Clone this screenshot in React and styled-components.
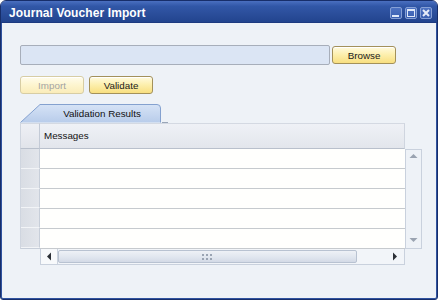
import React from 'react'
import styled, { createGlobalStyle } from 'styled-components'

const GlobalStyle = createGlobalStyle`
  html, body {
    margin: 0;
    padding: 0;
    background: #ffffff;
  }
  * { box-sizing: border-box; }
`

const rows = [1, 2, 3, 4, 5]

const App = () => {
  return (
    <>
      <GlobalStyle />
      <Window>
        <TitleBar>
          <Title>Journal Voucher Import</Title>
          <TitleButtons>
            <TitleButton aria-label="minimize">
              <svg width="10" height="10" viewBox="0 0 10 10">
                <rect x="1" y="7" width="7" height="2" fill="#dfe8f8" />
              </svg>
            </TitleButton>
            <TitleButton aria-label="maximize">
              <svg width="10" height="10" viewBox="0 0 10 10">
                <rect x="1.5" y="1.5" width="7" height="7" fill="none" stroke="#dfe8f8" strokeWidth="1" />
                <rect x="1" y="1" width="8" height="2" fill="#dfe8f8" />
              </svg>
            </TitleButton>
            <TitleButton aria-label="close">
              <svg width="10" height="10" viewBox="0 0 10 10">
                <path d="M2 2 L8 8 M8 2 L2 8" stroke="#e6ecf8" strokeWidth="2" />
              </svg>
            </TitleButton>
          </TitleButtons>
        </TitleBar>

        <Body>
          <FileRow>
            <PathInput type="text" />
            <YellowButton>Browse</YellowButton>
          </FileRow>

          <ActionRow>
            <YellowButton disabled>Import</YellowButton>
            <YellowButton>Validate</YellowButton>
          </ActionRow>

          <TabStrip>
            <Tab>
              <TabShape width="142" height="19" viewBox="0 0 142 19">
                <defs>
                  <linearGradient id="tabfill" x1="0" y1="0" x2="0" y2="1">
                    <stop offset="0" stopColor="#d6e3f6" />
                    <stop offset="1" stopColor="#b8ccea" />
                  </linearGradient>
                </defs>
                <path
                  d="M0.5 18.5 L20 0.5 L137 0.5 Q140.5 0.5 140.5 4 L140.5 18.5"
                  fill="url(#tabfill)"
                  stroke="#84a1cf"
                  strokeWidth="1"
                />
              </TabShape>
              <TabLabel>Validation Results</TabLabel>
            </Tab>
            <TabLine />
          </TabStrip>

          <Grid>
            <CornerCell />
            <HeaderCell>Messages</HeaderCell>
            <Blank />

            <RowHeaders>
              {rows.map((r) => (
                <RowHeader key={r} />
              ))}
            </RowHeaders>
            <RowsArea>
              {rows.map((r) => (
                <Row key={r} />
              ))}
            </RowsArea>
            <VScroll>
              <svg width="9" height="6" viewBox="0 0 9 6">
                <path d="M0.5 5 L4.5 1 L8.5 5 Z" fill="#9aa3b1" />
              </svg>
              <svg width="9" height="6" viewBox="0 0 9 6">
                <path d="M0.5 1 L4.5 5 L8.5 1 Z" fill="#9aa3b1" />
              </svg>
            </VScroll>

            <Blank />
            <HScroll>
              <ArrowBox>
                <svg width="6" height="9" viewBox="0 0 6 9">
                  <path d="M5 0.5 L1 4.5 L5 8.5 Z" fill="#2b2f36" />
                </svg>
              </ArrowBox>
              <Thumb>
                <svg width="11" height="6" viewBox="0 0 11 6">
                  {[0, 4, 8].map((x) => (
                    <g key={x} fill="#9aa4b3">
                      <rect x={x} y="0" width="2" height="2" />
                      <rect x={x} y="4" width="2" height="2" />
                    </g>
                  ))}
                </svg>
              </Thumb>
              <TrackRest>
                <svg width="6" height="9" viewBox="0 0 6 9">
                  <path d="M1 0.5 L5 4.5 L1 8.5 Z" fill="#2b2f36" />
                </svg>
              </TrackRest>
            </HScroll>
            <Blank />
          </Grid>
        </Body>
      </Window>
    </>
  )
}

export default App

const Window = styled.div`
  width: 438px;
  height: 300px;
  display: flex;
  flex-direction: column;
  border: 1px solid #172e6a;
  border-radius: 6px 6px 3px 3px;
  background: #eef2f7;
  box-shadow: inset 1px 0 0 #2f529f, inset -1px 0 0 #2f529f, inset 0 -1px 0 #2f529f;
  overflow: hidden;
  font-family: "Liberation Sans", Arial, sans-serif;
`

const TitleBar = styled.div`
  height: 22px;
  flex: none;
  display: flex;
  align-items: center;
  justify-content: space-between;
  padding: 0 5px 0 8px;
  background: linear-gradient(#4a6fc0 0%, #3157a7 25%, #2b4e9b 60%, #22448e 100%);
  border-bottom: 1px solid #1d3a80;
`

const Title = styled.div`
  color: #ffffff;
  font-weight: bold;
  font-size: 12px;
  letter-spacing: 0.1px;
  padding-top: 2px;
`

const TitleButtons = styled.div`
  display: flex;
  gap: 3px;
  padding-top: 2px;
`

const TitleButton = styled.div`
  width: 12px;
  height: 12px;
  display: flex;
  align-items: center;
  justify-content: center;
  background: linear-gradient(#4d72c2, #3a5fb0);
  border: 1px solid #86a0d6;
  border-radius: 2px;
`

const Body = styled.div`
  flex: 1;
  display: flex;
  flex-direction: column;
  padding: 22px 0 0 19px;
`

const FileRow = styled.div`
  display: flex;
  align-items: center;
  gap: 2px;
`

const PathInput = styled.input`
  width: 310px;
  height: 20px;
  margin: 0;
  background: #dbe5f4;
  border: 1px solid #a7aeba;
  border-radius: 2px;
  outline: none;
`

const YellowButton = styled.button`
  width: 64px;
  height: 18px;
  margin: 0;
  padding: 0;
  font-family: "Liberation Sans", Arial, sans-serif;
  font-size: 9.8px;
  color: #1a1a1a;
  background: linear-gradient(#fffbe0 0%, #fdf0b0 45%, #f8df80 100%);
  border: 1px solid #a3915a;
  border-radius: 3px;
  box-shadow: inset 0 1px 0 #ffffff;

  &:disabled {
    color: #a4a4a4;
    background: linear-gradient(#fffcec 0%, #fdf5cf 50%, #faecb9 100%);
    border-color: #d7cda4;
  }
`

const ActionRow = styled.div`
  display: flex;
  gap: 5px;
  margin-top: 11px;
`

const TabStrip = styled.div`
  display: flex;
  align-items: flex-end;
  margin-top: 10px;
  height: 19px;
`

const Tab = styled.div`
  position: relative;
  width: 142px;
  height: 19px;
  display: flex;
  align-items: center;
  justify-content: center;
  padding-left: 22px;
`

const TabShape = styled.svg`
  position: absolute;
  left: 0;
  top: 0;
`

const TabLabel = styled.span`
  position: relative;
  font-size: 9.8px;
  color: #111;
`

const TabLine = styled.div`
  width: 6px;
  height: 1px;
  background: #9aa6b8;
`

const Grid = styled.div`
  display: grid;
  grid-template-columns: 20px 365px 17px;
  grid-template-rows: 26px 100px 16px;
`

const CornerCell = styled.div`
  background: linear-gradient(#eef0f5, #e1e4ea);
  border-top: 1px solid #d4d9e2;
  border-left: 1px solid #cfd5df;
  border-right: 1px solid #c3cad6;
  border-bottom: 1px solid #b9c0cc;
`

const HeaderCell = styled.div`
  display: flex;
  align-items: center;
  padding: 0 0 2px 4px;
  font-size: 9.8px;
  color: #111;
  background: linear-gradient(#eff1f6, #e3e6ec);
  border-top: 1px solid #d4d9e2;
  border-right: 1px solid #cfd5df;
  border-bottom: 1px solid #b9c0cc;
`

const Blank = styled.div``

const RowHeaders = styled.div`
  display: flex;
  flex-direction: column;
  border-left: 1px solid #cfd5df;
  border-bottom: 1px solid #c7ced9;
`

const RowHeader = styled.div`
  height: 20px;
  background: linear-gradient(90deg, #d9dde4, #e2e5eb);
  border-bottom: 1px solid #f2f4f7;
  border-right: 1px solid #c7ced9;
`

const RowsArea = styled.div`
  display: flex;
  flex-direction: column;
  background: #fffffd;
`

const Row = styled.div`
  height: 20px;
  border-bottom: 1px solid #c6cace;
`

const VScroll = styled.div`
  display: flex;
  flex-direction: column;
  justify-content: space-between;
  align-items: center;
  padding: 3px 0 5px;
  background: #eef2f7;
  border: 1px solid #c9d1dd;
`

const HScroll = styled.div`
  display: flex;
  background: #f2f5f9;
  border: 1px solid #c9d1dd;
  border-top: none;
`

const ArrowBox = styled.div`
  width: 17px;
  display: flex;
  align-items: center;
  justify-content: center;
  background: #f7f9fb;
  border-right: 1px solid #cbd3de;
`

const Thumb = styled.div`
  width: 299px;
  display: flex;
  align-items: center;
  justify-content: center;
  margin: 1px 0;
  background: linear-gradient(#eef1f6, #dfe5ee 60%, #d3dae6);
  border: 1px solid #b8c2d1;
  border-radius: 2px;
`

const TrackRest = styled.div`
  flex: 1;
  display: flex;
  align-items: center;
  justify-content: flex-end;
  padding-right: 6px;
`
